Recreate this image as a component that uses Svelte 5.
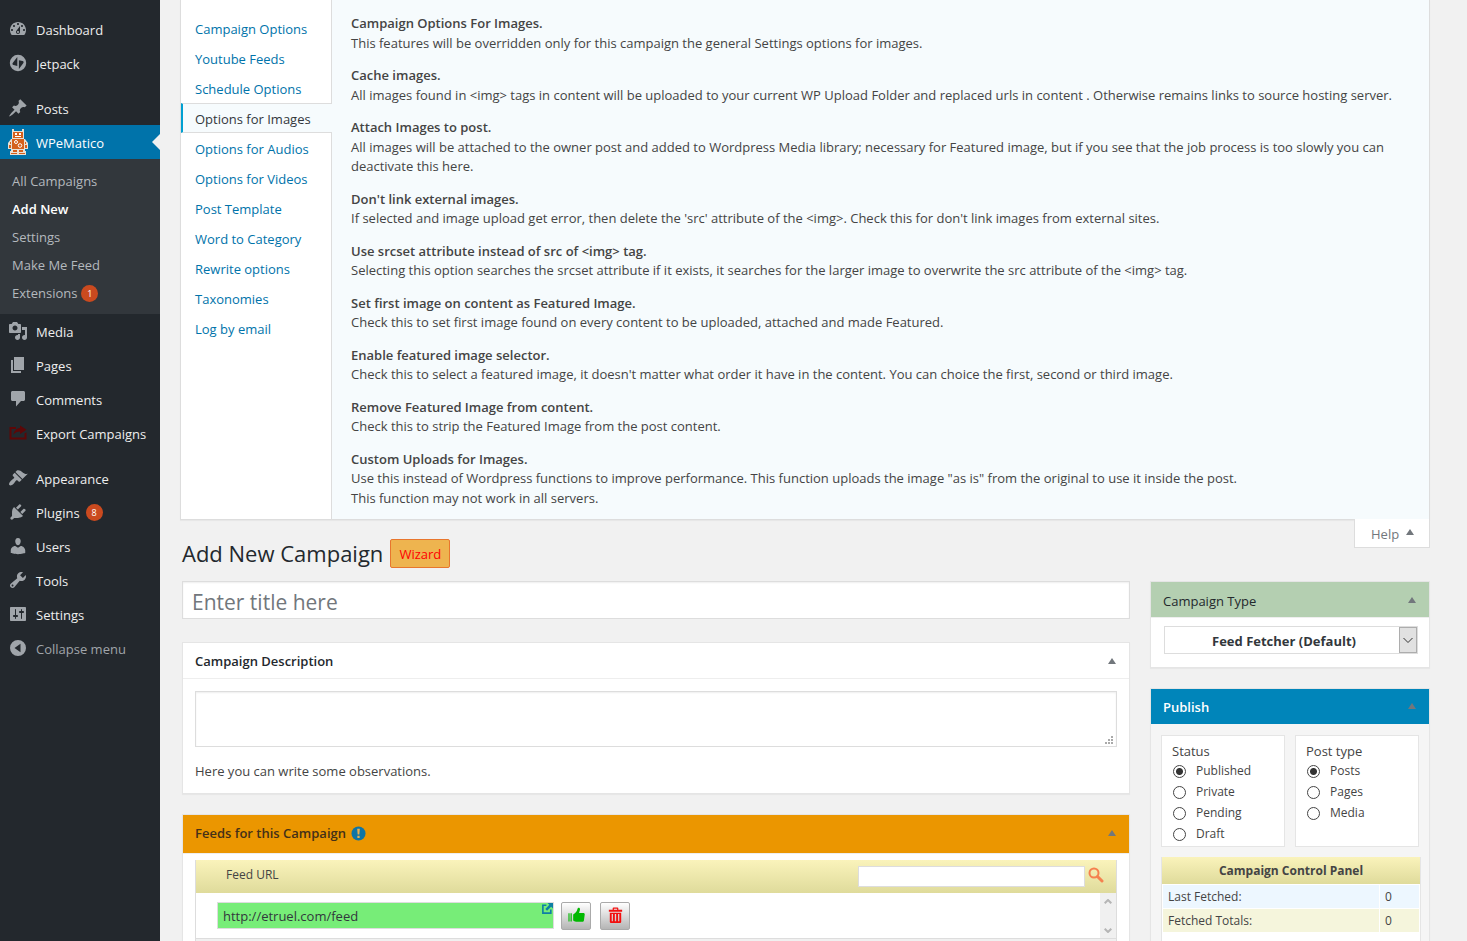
<script>
  const icons = {
    dashboard: 'M3.76 16h12.48c1.1-1.37 1.76-3.11 1.76-5 0-4.42-3.58-8-8-8s-8 3.58-8 8c0 1.89.66 3.63 1.76 5zM10 4c.55 0 1 .45 1 1s-.45 1-1 1-1-.45-1-1 .45-1 1-1zM6 6c.55 0 1 .45 1 1s-.45 1-1 1-1-.45-1-1 .45-1 1-1zm8 0c.55 0 1 .45 1 1s-.45 1-1 1-1-.45-1-1 .45-1 1-1zm-5.37 5.55L12 7v6c0 1.1-.9 2-2 2s-2-.9-2-2c0-.57.24-1.08.63-1.45zM4 10c.55 0 1 .45 1 1s-.45 1-1 1-1-.45-1-1 .45-1 1-1zm12 0c.55 0 1 .45 1 1s-.45 1-1 1-1-.45-1-1 .45-1 1-1zm-5 3c0-.55-.45-1-1-1s-1 .45-1 1 .45 1 1 1 1-.45 1-1z',
    jetpack: 'M10 1.8a8.2 8.2 0 1 0 0 16.4 8.2 8.2 0 0 0 0-16.4zM9.3 4v9L5.6 12c-1.1-.3-1.4-1-.9-2zm1.6 12V7.2l3.6.9c1.1.3 1.4 1 .9 2z',
    pin: 'M10.44 3.02l1.82-1.82 6.36 6.35-1.83 1.82c-1.05-.68-2.48-.57-3.41.36l-.75.75c-.92.93-1.04 2.35-.35 3.41l-1.83 1.82-2.41-2.41-2.8 2.79c-.42.42-3.38 2.71-3.8 2.29s1.86-3.39 2.28-3.81l2.79-2.79L4.1 9.36l1.83-1.82c1.05.69 2.48.57 3.4-.36l.75-.75c.93-.92 1.05-2.35.36-3.41z',
    media: 'M13 11V4c0-.55-.45-1-1-1h-1.67L9 1H5L3.67 3H2c-.55 0-1 .45-1 1v7c0 .55.45 1 1 1h10c.55 0 1-.45 1-1zM7 4.5c1.38 0 2.5 1.12 2.5 2.5S8.38 9.5 7 9.5 4.5 8.38 4.5 7 5.62 4.5 7 4.5zM14 6h5v10.5c0 1.38-1.12 2.5-2.5 2.5S14 17.88 14 16.5s1.12-2.5 2.5-2.5c.17 0 .34.02.5.05V9h-3V6zm-4 8.05V13h2v3.5c0 1.38-1.12 2.5-2.5 2.5S7 17.88 7 16.5 8.12 14 9.5 14c.17 0 .34.02.5.05z',
    pages: 'M6 15V2h10v13H6zm-1 1h8v2H3V5h2v11z',
    comments: 'M4.5 2h11c.8 0 1.5.7 1.5 1.5v7c0 .8-.7 1.5-1.5 1.5H13l-5 5.5V12H4.5C3.7 12 3 11.3 3 10.5v-7C3 2.7 3.7 2 4.5 2z',
    exporter: 'M12 5V2.5l6.5 4.3-6.5 4.2V8.500c-3 0-4.800.8-6.500 3.200.3-3.700 2.800-6.200 6.500-6.700zM1.500 4H8v2H3.500v8.500h13v-4l2-1.200V16.500h-17z',
    appearance: 'M14.48 11.06L7.41 3.99l1.5-1.5c.5-.56 2.3-.47 3.51.32 1.21.8 1.43 1.28 2.91 2.1 1.18.64 2.45 1.26 4.45.85zm-.71.71L6.7 4.7 4.93 6.47c-.39.39-.39 1.02 0 1.41l1.06 1.06c.39.39.39 1.03 0 1.42-.6.6-1.43 1.11-2.21 1.69-.35.26-.7.53-1.01.84C1.43 14.23.4 16.08 1.4 17.07c.99 1 2.84-.03 4.18-1.36.31-.31.58-.66.85-1.02.57-.78 1.08-1.61 1.69-2.21.39-.39 1.02-.39 1.41 0l1.06 1.06c.39.39 1.02.39 1.41 0z',
    plugins: 'M13.11 4.36L9.87 7.6 8 5.73l3.24-3.24c.35-.34 1.05-.2 1.56.32.52.51.66 1.21.31 1.55zm-8 1.77l.91-1.12 9.01 9.01-1.19.84c-.71.71-2.63 1.16-3.82 1.16H6.14L4.9 17.26c-.59.59-1.54.59-2.12 0-.59-.58-.59-1.53 0-2.12l1.24-1.24v-3.88c0-1.13.4-3.19 1.09-3.89zm7.26 3.97l3.24-3.24c.34-.35 1.04-.21 1.55.31.52.51.66 1.21.31 1.55l-3.24 3.25z',
    users: 'M10 9.25c-2.27 0-2.73-3.44-2.73-3.44C7 4.02 7.82 2 9.97 2c2.16 0 2.98 2.02 2.71 3.81 0 0-.41 3.44-2.68 3.44zm0 2.57L12.72 10c2.39 0 4.52 2.33 4.52 4.53v2.49s-3.65 1.13-7.24 1.13c-3.65 0-7.24-1.13-7.24-1.13v-2.49c0-2.25 1.94-4.48 4.47-4.48z',
    tools: 'M16.68 9.77c-1.34 1.34-3.3 1.67-4.95.99l-5.41 6.52c-.99.99-2.59.99-3.58 0s-.99-2.59 0-3.57l6.52-5.42c-.68-1.65-.35-3.61.99-4.95 1.28-1.28 3.12-1.62 4.72-1.06l-2.89 2.89 2.82 2.82 2.86-2.87c.53 1.58.18 3.39-1.08 4.65zM3.81 16.21c.4.39 1.04.39 1.43 0 .4-.4.4-1.04 0-1.43-.39-.4-1.03-.4-1.43 0-.39.39-.39 1.03 0 1.43z',
    settings: 'M18 16V4c0-.55-.45-1-1-1H3c-.55 0-1 .45-1 1v12c0 .55.45 1 1 1h14c.55 0 1-.45 1-1zM8 11h1c.55 0 1 .45 1 1s-.45 1-1 1H8v1.5c0 .28-.22.5-.5.5s-.5-.22-.5-.5V13H6c-.55 0-1-.45-1-1s.45-1 1-1h1V5.5c0-.28.22-.5.5-.5s.5.22.5.5V11zm5-2h-1c-.55 0-1-.45-1-1s.45-1 1-1h1V5.5c0-.28.22-.5.5-.5s.5.22.5.5V7h1c.55 0 1 .45 1 1s-.45 1-1 1h-1v5.5c0 .28-.22.5-.5.5s-.5-.22-.5-.5V9z',
    collapse: 'M10 2a8 8 0 1 0 0 16 8 8 0 0 0 0-16zM12.5 5.800v8.400L6.500 10z'
  };

  const menu = [
    { label: 'Dashboard', icon: 'dashboard' },
    { label: 'Jetpack', icon: 'jetpack' },
    { label: 'Posts', icon: 'pin', gap: true },
    {
      label: 'WPeMatico',
      current: true,
      sub: [
        { label: 'All Campaigns' },
        { label: 'Add New', current: true },
        { label: 'Settings' },
        { label: 'Make Me Feed' },
        { label: 'Extensions', count: 1 }
      ]
    },
    { label: 'Media', icon: 'media' },
    { label: 'Pages', icon: 'pages' },
    { label: 'Comments', icon: 'comments' },
    { label: 'Export Campaigns', icon: 'exporter' },
    { label: 'Appearance', icon: 'appearance', gap: true },
    { label: 'Plugins', icon: 'plugins', count: 8 },
    { label: 'Users', icon: 'users' },
    { label: 'Tools', icon: 'tools' },
    { label: 'Settings', icon: 'settings' }
  ];

  const tabs = [
    'Campaign Options', 'Youtube Feeds', 'Schedule Options', 'Options for Images',
    'Options for Audios', 'Options for Videos', 'Post Template', 'Word to Category',
    'Rewrite options', 'Taxonomies', 'Log by email'
  ];
  let activeTab = $state('Options for Images');

  const help = [
    ['Campaign Options For Images.', 'This features will be overridden only for this campaign the general Settings options for images.'],
    ['Cache images.', 'All images found in <img> tags in content will be uploaded to your current WP Upload Folder and replaced urls in content . Otherwise remains links to source hosting server.'],
    ['Attach Images to post.', 'All images will be attached to the owner post and added to Wordpress Media library; necessary for Featured image, but if you see that the job process is too slowly you can deactivate this here.'],
    ["Don't link external images.", "If selected and image upload get error, then delete the 'src' attribute of the <img>. Check this for don't link images from external sites."],
    ['Use srcset attribute instead of src of <img> tag.', 'Selecting this option searches the srcset attribute if it exists, it searches for the larger image to overwrite the src attribute of the <img> tag.'],
    ['Set first image on content as Featured Image.', 'Check this to set first image found on every content to be uploaded, attached and made Featured.'],
    ['Enable featured image selector.', "Check this to select a featured image, it doesn't matter what order it have in the content. You can choice the first, second or third image."],
    ['Remove Featured Image from content.', 'Check this to strip the Featured Image from the post content.'],
    ['Custom Uploads for Images.', 'Use this instead of Wordpress functions to improve performance. This function uploads the image "as is" from the original to use it inside the post.', 'This function may not work in all servers.']
  ];

  const statuses = ['Published', 'Private', 'Pending', 'Draft'];
  const postTypes = ['Posts', 'Pages', 'Media'];
  let status = $state('Published');
  let postType = $state('Posts');
  let feedUrl = $state('http://etruel.com/feed');
</script>

{#snippet glyph(name)}
  <svg class="glyph {name}" viewBox="0 0 20 20" aria-hidden="true"><path fill-rule="evenodd" d={icons[name]} /></svg>
{/snippet}

{#snippet toggle(label)}
  <button class="toggle" type="button" aria-label="Toggle panel: {label}">
    <svg viewBox="0 0 8 6" aria-hidden="true"><path d="M4 0l4 6H0z" /></svg>
  </button>
{/snippet}

<div class="admin">
  <nav class="sidebar" aria-label="Main menu">
    <ul>
      {#each menu as item}
        <li class:gap={item.gap} class:current={item.current}>
          <a class="top" href="#{item.label}">
            {#if item.icon}
              {@render glyph(item.icon)}
            {:else}
              <svg class="robot" viewBox="0 0 20 26" aria-hidden="true">
                <path fill="#e9e0d4" d="M4 0h2v2h8V0h2v10h1l3 4v6h-3v2h1v4H2v-4h1v-2H0v-6l3-4h1z" />
                <path fill="#d4601c" d="M5 3h10v6H5zM4 10h12v10H4zM2 13h1v2H2zM17 13h1v2h-1zM1 16h2v3H1zM17 16h2v3h-2zM5 21h4v2H5zM11 21h4v2h-4zM3 24h6v1H3zM11 24h6v1h-6z" />
                <path fill="#fff" d="M7 4h2v2H7zM11 4h2v2h-2zM7 7h6v1H7z" />
                <circle cx="8" cy="13" r="1.500" fill="none" stroke="#fff" />
                <circle cx="12" cy="16.500" r="1.800" fill="none" stroke="#fff" />
              </svg>
            {/if}
            <span class="text">{item.label}</span>
            {#if item.count}<span class="count">{item.count}</span>{/if}
          </a>
          {#if item.sub}
            <ul class="sub">
              {#each item.sub as s}
                <li>
                  <a href="#{s.label}" class:on={s.current}>{s.label}{#if s.count}<span class="count">{s.count}</span>{/if}</a>
                </li>
              {/each}
            </ul>
          {/if}
        </li>
      {/each}
    </ul>
    <button class="collapse" type="button">{@render glyph('collapse')}<span class="text">Collapse menu</span></button>
  </nav>

  <main>
    <section class="help" aria-label="Help">
      <ul class="tabs">
        {#each tabs as t}
          <li class:active={t === activeTab}>
            <a href="#{t}" onclick={() => (activeTab = t)}>{t}</a>
          </li>
        {/each}
      </ul>
      <div class="help-text">
        {#each help as [title, ...lines]}
          <p><b>{title}</b>{#each lines as line}<br />{line}{/each}</p>
        {/each}
      </div>
    </section>
    <div class="help-link">
      <button type="button">Help <svg viewBox="0 0 8 6" aria-hidden="true"><path d="M4 0l4 6H0z" /></svg></button>
    </div>

    <div class="page">
      <header>
        <h1>Add New Campaign</h1>
        <button class="wizard" type="button">Wizard</button>
      </header>

      <div class="columns">
        <div class="primary">
          <input class="title" type="text" placeholder="Enter title here" aria-label="Enter title here" />

          <section class="box">
            <div class="box-head"><h2>Campaign Description</h2>{@render toggle('Campaign Description')}</div>
            <div class="box-body">
              <div class="area">
                <textarea id="observations" aria-describedby="observations-note" aria-label="Campaign Description"></textarea>
                <svg class="grip" viewBox="0 0 8 8" aria-hidden="true"><path d="M6 0h2v2H6zM3 3h2v2H3zM6 3h2v2H6zM0 6h2v2H0zM3 6h2v2H3zM6 6h2v2H6z" /></svg>
              </div>
              <p class="note" id="observations-note">Here you can write some observations.</p>
            </div>
          </section>

          <section class="box feeds">
            <div class="box-head">
              <h2>Feeds for this Campaign</h2>
              <svg class="info" viewBox="0 0 16 16" aria-hidden="true"><circle cx="8" cy="8" r="7.500" fill="#0f75a5" /><path fill="#ecb04d" d="M6.600 3h2.800l-.5 6H7.100zM6.800 10.300h2.400v2.400H6.800z" /></svg>
              {@render toggle('Feeds for this Campaign')}
            </div>
            <div class="feed-list">
              <div class="feed-head">
                <span>Feed URL</span>
                <input type="search" aria-label="Search feeds" />
                <button type="button" aria-label="Search">
                  <svg viewBox="0 0 16 16" aria-hidden="true"><circle cx="6" cy="6" r="4.500" fill="none" stroke="#f5814f" stroke-width="2" /><path d="M9.500 9.500l4.500 4.500" stroke="#f5814f" stroke-width="3" stroke-linecap="round" /></svg>
                </button>
              </div>
              <div class="feed-scroll">
                <div class="feed-row">
                  <div class="url">
                    <input type="text" bind:value={feedUrl} aria-label="Feed URL" />
                    <a href="#feed" aria-label="Open feed">
                      <svg viewBox="0 0 10 10" aria-hidden="true"><path fill="none" stroke="#0f7fa5" stroke-width="1.500" d="M4 2H.8v7.200H8V6" /><path fill="#0f7fa5" d="M5 0h5v5L8.300 3.300 4.600 7 3 5.400l3.700-3.700z" /></svg>
                    </a>
                  </div>
                  <button class="tool" type="button" aria-label="Check feed">
                    <svg viewBox="0 0 20 20" aria-hidden="true"><path fill="#00b800" d="M12.700 1.900c.7.3 1.200 1.300.9 2.300L12.700 7.300h4.600c.8 0 1.500.7 1.400 1.500l-.9 6.400c-.1.8-.8 1.400-1.600 1.400H9.500c-.6 0-1.200-.2-1.700-.5L6.500 15.300V8.900c2.700-1.200 4-3.200 4.600-5.900.2-1 .8-1.400 1.600-1.100zM3.700 7.500H5v8.700H3.700zM1.500 7.500h1.200v8.700H1.500z" /></svg>
                  </button>
                  <button class="tool" type="button" aria-label="Delete feed">
                    <svg viewBox="0 0 20 20" aria-hidden="true"><path fill="#f20f0f" fill-rule="evenodd" d="M8 1.500h4c.6 0 1 .4 1 1V4h4v2H3V4h4V2.500c0-.6.4-1 1-1zM8.300 4h3.400V2.800H8.300zM4 7h12v9.500c0 .8-.7 1.500-1.500 1.500h-9c-.8 0-1.500-.7-1.500-1.500zM6 8.500V16h1.300V8.500zM9.300 8.500V16h1.400V8.500zM12.700 8.500V16H14V8.500z" /></svg>
                  </button>
                </div>
                <div class="bar" aria-hidden="true">
                  <svg viewBox="0 0 8 5"><path d="M.7 4.300L4 1l3.300 3.300" /></svg>
                  <svg viewBox="0 0 8 5"><path d="M.7.7L4 4 7.300.7" /></svg>
                </div>
              </div>
              <div class="feed-foot"></div>
            </div>
          </section>
        </div>

        <aside>
          <section class="box type">
            <div class="box-head"><h2>Campaign Type</h2>{@render toggle('Campaign Type')}</div>
            <div class="type-body">
              <div class="picker">
                <select aria-label="Campaign Type"><option>Feed Fetcher (Default)</option></select>
                <svg viewBox="0 0 18 26" aria-hidden="true"><rect x=".5" y=".5" width="17" height="25" fill="#e1e1e1" stroke="#adadad" /><path fill="none" stroke="#333" d="M4.500 11L9 15.500l4.500-4.500" /></svg>
              </div>
            </div>
          </section>

          <section class="box publish">
            <div class="box-head"><h2>Publish</h2>{@render toggle('Publish')}</div>
            <div class="publish-body">
              <div class="choices">
                <fieldset>
                  <legend>Status</legend>
                  {#each statuses as s}
                    <label><input type="radio" name="status" value={s} bind:group={status} />{s}</label>
                  {/each}
                </fieldset>
                <fieldset>
                  <legend>Post type</legend>
                  {#each postTypes as p}
                    <label><input type="radio" name="post-type" value={p} bind:group={postType} />{p}</label>
                  {/each}
                </fieldset>
              </div>
              <div class="control">
                <h3>Campaign Control Panel</h3>
                <table>
                  <tbody>
                    <tr><th scope="row">Last Fetched:</th><td>0</td></tr>
                    <tr><th scope="row">Fetched Totals:</th><td>0</td></tr>
                  </tbody>
                </table>
              </div>
            </div>
          </section>
        </aside>
      </div>
    </div>
  </main>
</div>

<style>
  :global(body) { background: #f1f1f1; }
  .admin, .admin * { box-sizing: border-box; }
  .admin {
    display: flex;
    height: 100vh;
    overflow: hidden;
    background: #f1f1f1;
    color: #444;
    font: 13px/20px "Open Sans", "Noto Sans", sans-serif;
  }
  ul { margin: 0; padding: 0; list-style: none; }
  a { color: #0073aa; text-decoration: none; }
  button, input, select, textarea { font: inherit; color: inherit; }
  button { border: 0; background: none; padding: 0; cursor: pointer; }
  h1, h2, h3, p { margin: 0; }

  .sidebar { flex: 0 0 160px; background: #23282d; padding-top: 12px; }
  .gap { margin-top: 11px; }
  .top, .collapse { display: flex; align-items: center; width: 100%; height: 34px; color: #eee; }
  .top .glyph, .collapse .glyph { width: 20px; height: 20px; margin: 0 8px; fill: #a0a5aa; flex: none; }
  .top .exporter { fill: #5c0707; }
  .text { padding-top: 2px; }
  .robot { width: 20px; height: 26px; margin: 0 8px; }
  .collapse { color: #a0a5aa; text-align: left; }
  .current .top { position: relative; background: #0073aa; color: #fff; }
  .current .top::after {
    content: ""; position: absolute; right: 0; top: 9px;
    border: 8px solid transparent; border-right-color: #f1f1f1; border-left: 0;
  }
  .count {
    display: inline-block; min-width: 17px; height: 17px; margin-left: 6px; border-radius: 9px;
    background: #ca4a1f; color: #fff; font-size: 9px; line-height: 17px; text-align: center;
  }
  .sub { background: #32373c; padding: 8px 0 7px; }
  .sub a { display: flex; align-items: center; height: 28px; padding: 0 12px; color: #b4b9be; }
  .sub .count { margin-left: 4px; }
  .sub .on { color: #fff; font-weight: 600; }

  main { flex: 1; min-width: 0; padding: 0 37px 0 20px; }
  .help { display: flex; border: 1px solid #ddd; border-top: 0; background: #f6fbfd; box-shadow: 0 1px 1px rgba(0, 0, 0, .04); }
  .tabs { flex: 0 0 151px; background: #fff; border-right: 1px solid #ddd; padding-top: 13px; }
  .tabs a { display: block; height: 30px; padding: 6px 0 4px 14px; }
  .tabs .active { margin-right: -1px; }
  .tabs .active a { background: #f6fbfd; color: #32373c; border: solid #ddd; border-width: 1px 0; border-left: 2px solid #00a0d2; padding: 5px 0 3px 12px; }
  .help-text { flex: 1; padding: 14px 19px 11px; line-height: 1.5; }
  .help-text p + p { margin-top: 13px; }
  b, h2 { font-weight: 600; }
  .help-link { display: flex; justify-content: flex-end; height: 28px; margin-top: -1px; position: relative; }
  .help-link button { display: flex; align-items: center; gap: 7px; width: 76px; height: 29px; padding: 2px 0 0 16px; background: #fff; border: 1px solid #ddd; border-top: 0; color: #72777c; }
  .help-link svg, .toggle svg { width: 8px; height: 6px; fill: #72777c; }
  .help-link svg { margin-bottom: 4px; }

  .page { padding-left: 2px; }
  header { display: flex; align-items: center; gap: 7px; height: 29px; margin: -8px 0 13px; }
  h1 { color: #23282d; font-size: 22px; font-weight: 400; line-height: 29px; }
  .wizard { height: 29px; width: 60px; border: 1px solid #e8762d; border-radius: 2px; background: #eeb44f; color: #f00; font-weight: 500; }
  .columns { display: grid; grid-template-columns: minmax(0, 1fr) 280px; gap: 20px; }
  .title { display: block; width: 100%; height: 38px; margin-bottom: 23px; padding: 5px 9px 1px; border: 1px solid #ddd; background: #fff; box-shadow: inset 0 1px 2px rgba(0, 0, 0, .07); font-size: 21px; }
  .title::placeholder { color: #72777c; opacity: 1; }
  .box { margin-bottom: 20px; border: 1px solid #e5e5e5; background: #fff; box-shadow: 0 1px 1px rgba(0, 0, 0, .04); }
  .box-head { display: flex; align-items: center; height: 36px; padding: 0 12px; border-bottom: 1px solid #eee; color: #23282d; }
  h2 { font-size: 13px; line-height: 20px; }
  .toggle { display: flex; margin-left: auto; padding: 6px 1px 6px 6px; }
  .box-body { padding: 12px; }
  .area { display: flex; position: relative; }
  textarea { width: 100%; height: 56px; border: 1px solid #ddd; background: #fff; box-shadow: inset 0 1px 2px rgba(0, 0, 0, .07); resize: none; }
  .grip { position: absolute; right: 4px; bottom: 3px; width: 8px; height: 8px; fill: #aaa; }
  .note { margin-top: 14px; }

  .feeds .box-head { height: 39px; padding-bottom: 2px; background: #eb9600; color: #443018; }
  .info { width: 15px; height: 15px; margin-left: 5px; }
  .feed-list { margin: 6px 12px 0; border: solid #ddd; border-width: 0 1px; }
  .feed-head { display: flex; align-items: center; height: 33px; padding: 0 12px 0 30px; background: linear-gradient(#faf3bb, #dfdb9b); font-size: 12px; }
  .feed-head span { padding-bottom: 4px; }
  .feed-head input { width: 227px; height: 21px; margin-left: auto; border: 1px solid #ddd; background: #fff; }
  .feed-head button { display: flex; margin-left: 3px; padding-bottom: 4px; }
  .feed-head svg { width: 16px; height: 16px; }
  .feed-scroll { display: flex; height: 46px; border-bottom: 1px solid #ddd; }
  .feed-row { flex: 1; display: flex; align-items: center; padding-left: 21px; }
  .url { position: relative; width: 337px; margin-right: 7px; }
  .url input { display: block; width: 100%; height: 27px; padding: 0 5px; border: 1px solid #ddd; background: #77ed78; color: #32373c; }
  .url a { position: absolute; right: 1px; top: 1px; display: flex; }
  .url svg { width: 11px; height: 11px; }
  .tool { display: flex; align-items: center; justify-content: center; width: 30px; height: 28px; margin-right: 9px; border: 1px solid #aaa; border-radius: 2px; background: linear-gradient(#fff, #b5b5b5); }
  .tool svg { width: 19px; height: 19px; }
  .bar { display: flex; flex-direction: column; justify-content: space-between; align-items: center; width: 16px; padding: 6px 0 5px; background: #f0f0f0; }
  .bar svg { width: 8px; height: 5px; fill: none; stroke: #b5b5b5; stroke-width: 2; }
  .feed-foot { height: 30px; background: #f0f0f0; }

  aside h2 { padding-top: 2px; }
  .type h2 { font-weight: 500; }
  .type .box-head { background: #b4cfb1; }
  .type-body { padding: 8px 11px 13px 13px; }
  .picker { display: flex; position: relative; }
  select { appearance: none; width: 100%; height: 28px; padding: 2px 28px 0 14px; border: 1px solid #ddd; border-radius: 0; background: #fff; color: #32373c; font-weight: 700; text-align: center; text-align-last: center; }
  .picker svg { position: absolute; right: 1px; top: 1px; width: 18px; height: 26px; pointer-events: none; }

  .publish { background: #f5f5f5; }
  .publish .box-head { height: 35px; border-bottom-color: #0085ba; background: #0085ba; color: #fff; }
  .publish-body { padding: 11px 10px 20px; }
  .choices { display: grid; grid-template-columns: 124px 124px; gap: 10px; }
  fieldset { display: flex; flex-direction: column; min-width: 0; height: 112px; margin: 0; padding: 5px 10px; border: 1px solid #e5e5e5; background: #fff; }
  legend { float: left; padding: 0; line-height: 20px; font-weight: 500; }
  label { display: flex; align-items: center; height: 20px; font-size: 12px; }
  label + label { margin-top: 1px; }
  input[type="radio"] { appearance: none; width: 13px; height: 13px; margin: 0 10px 0 1px; border: 1px solid #444; border-radius: 50%; background: #fff; }
  input[type="radio"]:checked { background: radial-gradient(circle, #333 3px, #fff 4px); }
  .control { margin: 10px -2px 0 0; border: 1px solid #e5e5e5; border-top: 0; background: #fff; padding-bottom: 30px; }
  h3 { height: 27px; background: linear-gradient(#faf3bb, #dfdb9b); font-size: 12px; font-weight: 700; line-height: 28px; text-align: center; }
  table { width: 100%; border-collapse: separate; border-spacing: 1px; }
  th, td { height: 23px; padding: 1px 5px 0; font-weight: 400; font-size: 12px; text-align: left; }
  td { width: 39px; }
  tr:nth-child(1) > * { background: #edf7ff; }
  tr:nth-child(2) > * { background: #f5f5dc; }
</style>
